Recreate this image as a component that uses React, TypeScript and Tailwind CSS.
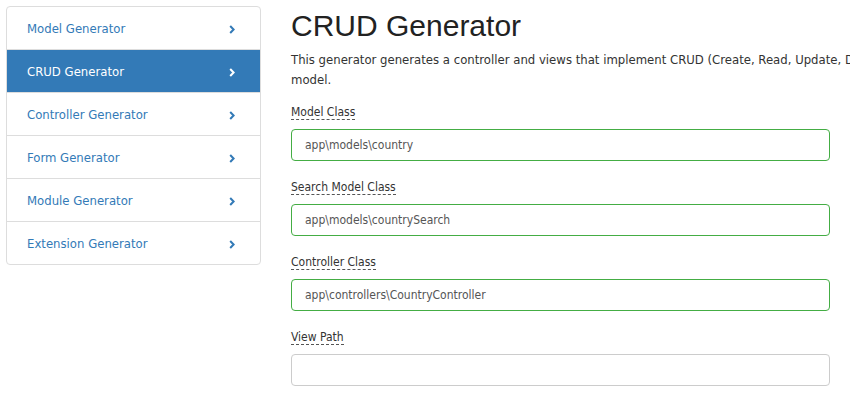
import React from 'react';

const generators = [
  'Model Generator',
  'CRUD Generator',
  'Controller Generator',
  'Form Generator',
  'Module Generator',
  'Extension Generator',
];

const fields = [
  { label: 'Model Class', value: 'app\\models\\country', ok: true },
  { label: 'Search Model Class', value: 'app\\models\\countrySearch', ok: true },
  { label: 'Controller Class', value: 'app\\controllers\\CountryController', ok: true },
  { label: 'View Path', value: '', ok: false },
];

const Chevron = () => (
  <svg width="6" height="9" viewBox="0 0 6 9" fill="none">
    <polyline points="1.2,1 4.6,4.5 1.2,8" stroke="currentColor" strokeWidth="2" />
  </svg>
);

export default function App() {
  return (
    <div className="flex w-[850px] h-[405px] overflow-hidden bg-white font-['DejaVu_Sans_Condensed','DejaVu_Sans',sans-serif] text-[12px] text-[#333]">
      {/* sidebar */}
      <div className="pl-[6px] pt-[6px] w-[285px] shrink-0">
        <div className="w-[255px] border border-[#ddd] rounded-[4px] overflow-hidden">
          {generators.map((g, i) => {
            const active = g === 'CRUD Generator';
            return (
              <div
                key={g}
                className={`flex items-center justify-between pt-[2px] pl-[20px] pr-[25px] text-[13px] ${
                  i > 0 ? 'h-[43px] border-t border-[#ddd]' : 'h-[42px]'
                } ${active ? 'bg-[#337ab7] text-white border-[#337ab7]' : 'text-[#337ab7]'}`}
              >
                <span>{g}</span>
                <Chevron />
              </div>
            );
          })}
        </div>
      </div>

      {/* main */}
      <div className="flex-1 min-w-0 overflow-hidden pl-[6px] pr-[20px]">
        <h1 className="mt-[9px] font-['Liberation_Sans',sans-serif] text-[30px] leading-[33px] text-[#222]">
          CRUD Generator
        </h1>
        <p className="mt-[8px] text-[13px] leading-[20px] whitespace-nowrap">
          This generator generates a controller and views that implement CRUD (Create, Read, Update, Delete)
          <br />
          model.
        </p>
        <div className="mt-[13px] flex flex-col gap-[17px]">
          {fields.map((f) => (
            <div key={f.label}>
              <div className="h-[20px]">
                <span className="border-b border-dashed border-[#555]">{f.label}</span>
              </div>
              <div
                className={`mt-[6px] h-[32px] flex items-center px-[13px] rounded-[4px] border text-[#555] ${
                  f.ok ? 'border-[#44ad44]' : 'border-[#ccc]'
                }`}
              >
                {f.value}
              </div>
            </div>
          ))}
        </div>
      </div>
    </div>
  );
}
